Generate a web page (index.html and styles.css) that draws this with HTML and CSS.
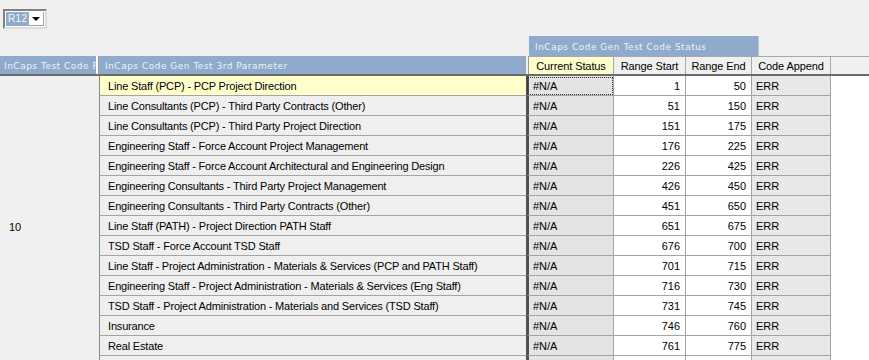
FILE: index.html
```html
<!DOCTYPE html>
<html>
<head>
<meta charset="utf-8">
<link rel="stylesheet" href="styles.css">
</head>
<body>
<div class="toolbar">
  <div class="select">
    <span class="select-val">R12</span>
    <span class="select-btn"><svg width="8" height="4" viewBox="0 0 8 4"><path d="M0 0H8L4 4Z" fill="#000"/></svg></span>
  </div>
</div>
<div class="pivot">
  <div class="group-row">
    <div class="group-spacer"></div>
    <div class="group-head">InCaps Code Gen Test Code Status</div>
  </div>
  <div class="head-row">
    <div class="h-code">InCaps Test Code R</div>
    <div class="h-sep"></div>
    <div class="h-param">InCaps Code Gen Test 3rd Parameter</div>
    <div class="h-gap"></div>
    <div class="h-cell h-status">Current Status</div>
    <div class="h-cell h-start">Range Start</div>
    <div class="h-cell h-end">Range End</div>
    <div class="h-cell h-append">Code Append</div>
    <div class="h-rest"></div>
  </div>
  <div class="body">
    <div class="code-col">10</div>
    <div class="rows">
      <div class="row active"><div class="c-param">Line Staff (PCP) - PCP Project Direction</div><div class="c-status">#N/A</div><div class="c-num">1</div><div class="c-num">50</div><div class="c-append">ERR</div><div class="c-rest"></div></div>
      <div class="row"><div class="c-param">Line Consultants (PCP) - Third Party Contracts (Other)</div><div class="c-status">#N/A</div><div class="c-num">51</div><div class="c-num">150</div><div class="c-append">ERR</div><div class="c-rest"></div></div>
      <div class="row"><div class="c-param">Line Consultants (PCP) - Third Party Project Direction</div><div class="c-status">#N/A</div><div class="c-num">151</div><div class="c-num">175</div><div class="c-append">ERR</div><div class="c-rest"></div></div>
      <div class="row"><div class="c-param">Engineering Staff - Force Account Project Management</div><div class="c-status">#N/A</div><div class="c-num">176</div><div class="c-num">225</div><div class="c-append">ERR</div><div class="c-rest"></div></div>
      <div class="row"><div class="c-param">Engineering Staff - Force Account Architectural and Engineering Design</div><div class="c-status">#N/A</div><div class="c-num">226</div><div class="c-num">425</div><div class="c-append">ERR</div><div class="c-rest"></div></div>
      <div class="row"><div class="c-param">Engineering Consultants - Third Party Project Management</div><div class="c-status">#N/A</div><div class="c-num">426</div><div class="c-num">450</div><div class="c-append">ERR</div><div class="c-rest"></div></div>
      <div class="row"><div class="c-param">Engineering Consultants - Third Party Contracts (Other)</div><div class="c-status">#N/A</div><div class="c-num">451</div><div class="c-num">650</div><div class="c-append">ERR</div><div class="c-rest"></div></div>
      <div class="row"><div class="c-param">Line Staff (PATH) - Project Direction PATH Staff</div><div class="c-status">#N/A</div><div class="c-num">651</div><div class="c-num">675</div><div class="c-append">ERR</div><div class="c-rest"></div></div>
      <div class="row"><div class="c-param">TSD Staff - Force Account TSD Staff</div><div class="c-status">#N/A</div><div class="c-num">676</div><div class="c-num">700</div><div class="c-append">ERR</div><div class="c-rest"></div></div>
      <div class="row"><div class="c-param">Line Staff - Project Administration - Materials &amp; Services (PCP and PATH Staff)</div><div class="c-status">#N/A</div><div class="c-num">701</div><div class="c-num">715</div><div class="c-append">ERR</div><div class="c-rest"></div></div>
      <div class="row"><div class="c-param">Engineering Staff - Project Administration - Materials &amp; Services (Eng Staff)</div><div class="c-status">#N/A</div><div class="c-num">716</div><div class="c-num">730</div><div class="c-append">ERR</div><div class="c-rest"></div></div>
      <div class="row"><div class="c-param">TSD Staff - Project Administration - Materials and Services (TSD Staff)</div><div class="c-status">#N/A</div><div class="c-num">731</div><div class="c-num">745</div><div class="c-append">ERR</div><div class="c-rest"></div></div>
      <div class="row"><div class="c-param">Insurance</div><div class="c-status">#N/A</div><div class="c-num">746</div><div class="c-num">760</div><div class="c-append">ERR</div><div class="c-rest"></div></div>
      <div class="row"><div class="c-param">Real Estate</div><div class="c-status">#N/A</div><div class="c-num">761</div><div class="c-num">775</div><div class="c-append">ERR</div><div class="c-rest"></div></div>
      <div class="row"><div class="c-param"></div><div class="c-status"></div><div class="c-num"></div><div class="c-num"></div><div class="c-append"></div><div class="c-rest"></div></div>
    </div>
  </div>
</div>
</body>
</html>
```

FILE: styles.css
```css
html, body {
  margin: 0;
  padding: 0;
  background: #f0f0f0;
  overflow: hidden;
}
body {
  width: 869px;
  height: 360px;
  font-family: "Liberation Sans", Arial, sans-serif;
  font-size: 11px;
  color: #000;
}
.toolbar {
  height: 36px;
  padding: 9px 0 0 3px;
  box-sizing: border-box;
}
.select {
  display: flex;
  width: 44px;
  height: 20px;
  box-sizing: border-box;
  border: 2px solid #808080;
  border-right-color: #dcdcdc;
  border-bottom-color: #dcdcdc;
  background: #fff;
  padding: 1px;
}
.select-val {
  flex: 1;
  background: #8faacb;
  color: #f4f6fa;
  font-size: 10px;
  letter-spacing: 0.4px;
  line-height: 14px;
  padding-left: 2px;
}
.select-btn {
  width: 15px;
  display: flex;
  align-items: center;
  justify-content: center;
  background: #fff;
  border-right: 1px solid #a0a0a0;
  border-bottom: 1px solid #a0a0a0;
  box-sizing: border-box;
}
.pivot {
  display: flex;
  flex-direction: column;
}
.group-row {
  display: flex;
  height: 20px;
}
.group-spacer {
  width: 529px;
}
.group-head {
  width: 230px;
  box-sizing: border-box;
  background: #8faacb;
  color: #eef2f8;
  font-family: "DejaVu Sans", sans-serif;
  font-size: 9px;
  letter-spacing: 0.5px;
  line-height: 20px;
  padding-left: 6px;
  padding-top: 1px;
  border-right: 1px solid #b6c4d6;
}
.head-row {
  display: flex;
  height: 20px;
  box-sizing: border-box;
  border-bottom: 2px solid #6b6b6b;
}
.h-code, .h-param {
  background: #8faacb;
  color: #eef2f8;
  font-family: "DejaVu Sans", sans-serif;
  font-size: 9px;
  letter-spacing: 0.5px;
  line-height: 18px;
  padding-top: 1px;
  white-space: nowrap;
  overflow: hidden;
}
.h-code {
  width: 96px;
  padding-left: 4px;
  box-sizing: border-box;
}
.h-sep {
  width: 3px;
  background: #fafafa;
  border-right: 1px solid #9a9a9a;
  box-sizing: border-box;
}
.h-param {
  width: 427px;
  padding-left: 6px;
  box-sizing: border-box;
}
.h-gap {
  width: 3px;
  border-right: 1px solid #9a9a9a;
  box-sizing: border-box;
}
.h-cell {
  box-sizing: border-box;
  line-height: 18px;
  text-align: center;
  border-top: 1px solid #a8a8a8;
  border-right: 1px solid #a8a8a8;
  background: #f0f0f0;
  letter-spacing: -0.1px;
}
.h-status { width: 85px; background: #ffffcc; }
.h-start { width: 72px; }
.h-end { width: 66px; }
.h-append { width: 79px; }
.h-rest {
  flex: 1;
  border-top: 1px solid #a8a8a8;
}
.body {
  display: flex;
}
.code-col {
  width: 99px;
  display: flex;
  align-items: center;
  padding-left: 9px;
  padding-top: 1px;
  box-sizing: border-box;
}
.rows {
  flex: 1;
  display: flex;
  flex-direction: column;
}
.row {
  display: grid;
  grid-template-columns: 427px 88px 72px 66px 79px 1fr;
  height: 20px;
}
.row > div {
  box-sizing: border-box;
  line-height: 19px;
  padding-top: 1px;
  white-space: nowrap;
  overflow: hidden;
  border-bottom: 1px solid #a4a4a4;
}
.c-param {
  background: #efefef;
  border-left: 1px solid #8a8a8a;
  padding-left: 8px;
  letter-spacing: -0.17px;
}
.row.active .c-param {
  background: #ffffcc;
}
.c-status {
  background: #e4e4e4;
  border-left: 3px solid #505050;
  border-right: 1px solid #a4a4a4;
  padding-left: 4px;
}
.row.active .c-status {
  outline: 1px dotted #333;
  outline-offset: -2px;
}
.c-num {
  background: #fff;
  text-align: right;
  padding-right: 5px;
  border-right: 1px solid #a4a4a4;
}
.c-append {
  background: #e8e8e8;
  border-right: 1px solid #a4a4a4;
  padding-left: 4px;
}
.row > .c-rest {
  background: #fff;
  border-bottom: none;
}
```
